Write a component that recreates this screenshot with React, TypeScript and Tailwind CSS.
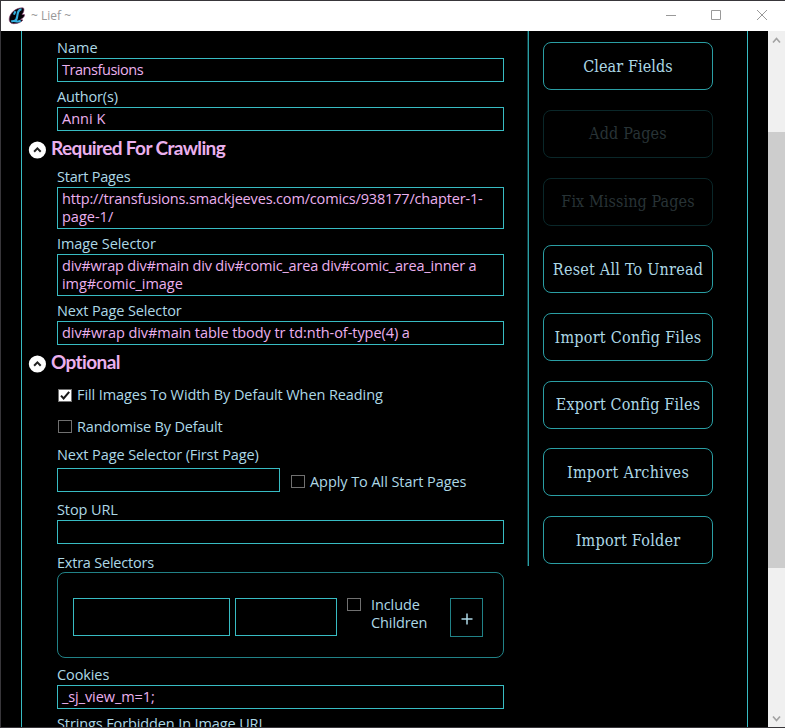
import type { ReactNode } from "react";

function Label({ children, className = "mt-1.5" }: { children: ReactNode; className?: string }) {
  return <div className={`h-[19px] whitespace-nowrap leading-[18px] ${className}`}>{children}</div>;
}

function Field({ children, className = "h-6" }: { children?: ReactNode; className?: string }) {
  return (
    <div className={`box-border whitespace-nowrap border border-[#38bcc3] px-1 pt-0.5 leading-[18px] text-[#ebb0ee] ${className}`}>
      {children}
    </div>
  );
}

function Check({ checked = false }: { checked?: boolean }) {
  return (
    <span className={`block h-[13px] w-[14px] shrink-0 border border-[#707070] ${checked ? "bg-white" : "bg-black"}`}>
      {checked && (
        <svg viewBox="0 0 12 11" className="block h-[11px] w-3" fill="none" stroke="#181818" strokeWidth="2">
          <path d="M2 5.6 4.6 8.4 10.2 1.8" />
        </svg>
      )}
    </span>
  );
}

function Heading({ children }: { children: ReactNode }) {
  return (
    <div className="-ml-[29px] flex h-[37px]">
      <svg viewBox="0 0 18 18" className="mt-[10px] h-[18px] w-[18px] shrink-0">
        <circle cx="9.4" cy="9" r="8.6" fill="#fff" />
        <path d="M6.100 10.700 9.400 7.400l3.300 3.300" fill="none" stroke="#222" strokeWidth="2" />
      </svg>
      <h2 className="ml-[5px] mt-[5px] whitespace-nowrap font-['Lato',sans-serif] text-[19px] font-bold leading-6 tracking-[-0.62px] text-[#ebb0ee]">
        {children}
      </h2>
    </div>
  );
}

const actions = [
  { text: "Clear Fields", spacing: "tracking-[0.1px]" },
  { text: "Add Pages", spacing: "tracking-[0.2px]", disabled: true },
  { text: "Fix Missing Pages", spacing: "tracking-[0.1px]", disabled: true },
  { text: "Reset All To Unread", spacing: "tracking-[0.23px]" },
  { text: "Import Config Files", spacing: "tracking-[0.25px]" },
  { text: "Export Config Files", spacing: "tracking-[0.15px]" },
  { text: "Import Archives", spacing: "tracking-[0.3px]" },
  { text: "Import Folder", spacing: "tracking-[0.25px]" },
];

export default function App() {
  return (
    <div className="flex h-[728px] w-[785px] flex-col overflow-hidden border border-r-0 border-[#38363a] bg-black font-['Open_Sans','Noto_Sans',sans-serif] text-[14.5px] text-[#add8e6]">
      <header className="flex h-[30px] shrink-0 items-center bg-white">
        <svg viewBox="0 0 18 18" className="-mt-px ml-[7px] h-[18px] w-[18px]" fill="none">
          <path d="M15.500 1C10 0 3.500 4 1.500 10c-1 4 .5 6.500 4 6.700 4.500.2 8-1.700 9.500-3.700l-2.500-.500c3-1.500 4.500-3.500 4-5L14 7.500C16 5 16.500 2.500 15.500 1Z" fill="#050208" stroke="#8f4578" strokeWidth=".6" />
          <path d="M13.500 2.300C10 2.500 9.700 6 9.200 9.500c-.300 2.500-1.300 4.300-3.200 4.800M3.200 14.500c3.300-1.600 5.800 1.400 9.500-.8M7.500 4.300 5.900 7.600" stroke="#35b0e0" strokeWidth="2.100" />
        </svg>
        <span className="ml-[5px] text-[12px] leading-4 text-[#999]">~ Lief ~</span>
        <svg viewBox="0 0 102 14" className="-mt-0.5 ml-auto mr-[17px] h-[14px] w-[102px]" fill="none" stroke="#999">
          <path d="M0 7.500h10M45.500 2.500h9v9h-9zM91 2l10 10M101 2 91 12" />
        </svg>
      </header>

      <div className="flex min-h-0 flex-1">
        <main className="ml-5 flex w-[727px] shrink-0 overflow-hidden border-x border-[#38bcc3]">
          <div className="ml-[35px] w-[447px] shrink-0">
            <Label className="mt-[8px]">Name</Label>
            <Field><span className="tracking-[-0.45px]">Transfusions</span></Field>
            <Label className="mt-1.5 tracking-[-0.15px]">Author(s)</Label>
            <Field>Anni K</Field>

            <Heading>Required For Crawling</Heading>
            <Label className="tracking-[-0.22px]">Start Pages</Label>
            <Field className="h-[42px]">
              <div className="tracking-[-0.16px]">http://transfusions.smackjeeves.com/comics/938177/chapter-1-</div>
              <div>page-1/</div>
            </Field>
            <Label className="mt-1.5 tracking-[-0.08px]">Image Selector</Label>
            <Field className="h-[42px]">
              <div className="tracking-[-0.19px]">div#wrap div#main div div#comic_area div#comic_area_inner a</div>
              <div className="tracking-[-0.05px]">img#comic_image</div>
            </Field>
            <Label className="mt-1.5 tracking-[-0.12px]">Next Page Selector</Label>
            <Field><span className="tracking-[-0.06px]">div#wrap div#main table tbody tr td:nth-of-type(4) a</span></Field>

            <Heading>Optional</Heading>
            <label className="flex h-[26px] items-center gap-[5px] pl-px">
              <Check checked />
              <span className="whitespace-nowrap tracking-[-0.09px]">Fill Images To Width By Default When Reading</span>
            </label>
            <label className="mt-[5px] flex h-[26px] items-center gap-[5px] pl-px">
              <Check />
              <span className="pt-px tracking-[-0.18px]">Randomise By Default</span>
            </label>
            <Label className="mb-[3px] mt-[7px] tracking-[-0.1px]">Next Page Selector (First Page)</Label>
            <div className="flex">
              <Field className="h-6 w-[223px]" />
              <label className="ml-[11px] flex h-[27px] items-center gap-[5px]">
                <Check />
                <span className="whitespace-nowrap tracking-[-0.07px]">Apply To All Start Pages</span>
              </label>
            </div>
            <Label className="mt-[6px] tracking-[-0.1px]">Stop URL</Label>
            <Field />
            <Label className="mb-[-1px] mt-[10px] tracking-[-0.22px]">Extra Selectors</Label>
            <div className="flex h-[86px] rounded-[8px] border border-[#218287] pl-[15px] pt-[25px]">
              <Field className="h-[38px] w-[157px]" />
              <Field className="ml-[5px] h-[38px] w-[102px]" />
              <label className="ml-[10px] flex w-[103px] gap-[10px]">
                <Check />
                <span className="-mt-[2px] leading-[18px] tracking-[-0.1px]">Include<br />Children</span>
              </label>
              <button className="flex h-[39px] w-[33px] items-center justify-center border border-[#218287]">
                <svg viewBox="0 0 12 12" className="mt-[3px] h-3 w-3" stroke="#add8e6" strokeWidth="1.500">
                  <path d="M6 .5v11M.5 6h11" />
                </svg>
              </button>
            </div>
            <Label className="mt-[8px] tracking-[-0.1px]">Cookies</Label>
            <Field><span className="tracking-[-0.08px]">_sj_view_m=1;</span></Field>
            <Label className="mt-1.5 tracking-[-0.12px]">Strings Forbidden In Image URL</Label>
          </div>

          <aside className="ml-[24px] flex h-[535px] shrink-0 flex-col gap-[19.7px] border-l border-[#2a9ea4] pl-[14px] pt-[11.25px] shadow-[-1px_0_0_#103e41]">
            {actions.map((action) => (
              <button
                key={action.text}
                disabled={action.disabled}
                className={`h-12 w-[170px] shrink-0 whitespace-nowrap rounded-[8px] border pt-px font-['DejaVu_Serif_Condensed','DejaVu_Serif',serif] text-[16px] ${action.spacing} ${action.disabled ? "border-[#0a2729] text-[#283336]" : "border-[#2a9ea4] text-[#add8e6]"}`}
              >
                {action.text}
              </button>
            ))}
          </aside>
        </main>

        <div className="ml-auto flex w-[17px] flex-col bg-[#f0f0f0]">
          <svg viewBox="0 0 17 17" className="h-[17px] w-[17px]" fill="none" stroke="#a3a3a3" strokeWidth="1.700">
            <path d="M5 11.500 8.500 7.500l3.500 4" />
          </svg>
          <div className="mt-[84px] h-[436px] bg-[#cdcdcd]" />
          <svg viewBox="0 0 17 17" className="mt-auto h-[17px] w-[17px]" fill="none" stroke="#a3a3a3" strokeWidth="1.700">
            <path d="M5 6.500l3.500 4 3.500-4" />
          </svg>
        </div>
      </div>
    </div>
  );
}
